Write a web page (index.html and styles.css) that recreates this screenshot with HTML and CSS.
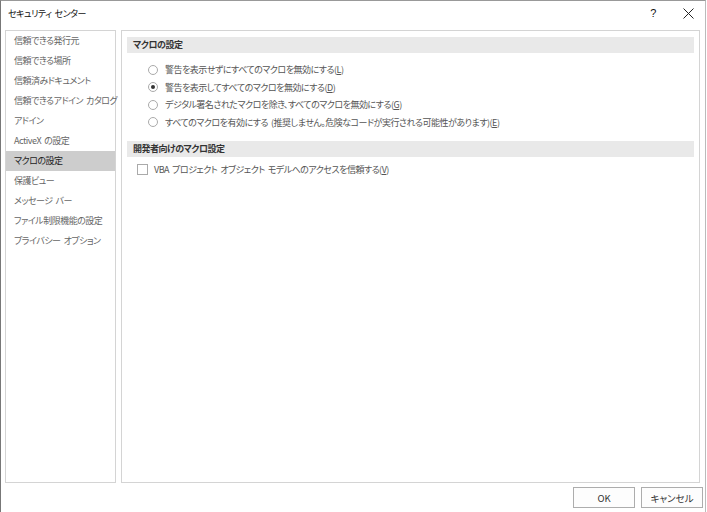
FILE: index.html
```html
<!DOCTYPE html>
<html lang="ja">
<head>
    <meta charset="UTF-8">
    <title>セキュリティ センター</title>
    <link rel="stylesheet" href="styles.css">
</head>
<body>

<div class="dialog">
    <div class="titlebar">
        <span class="title">セキュリティ センター</span>
        <span class="help">?</span>
        <span class="close">
            <svg width="11" height="11" viewBox="0 0 11 11"><path d="M0.5 0.5 L10.5 10.5 M10.5 0.5 L0.5 10.5" stroke="#222" stroke-width="1" fill="none"/></svg>
        </span>
    </div>

    <div class="main">
        <ul class="nav">
            <li>信頼できる発行元</li>
            <li>信頼できる場所</li>
            <li>信頼済みドキュメント</li>
            <li>信頼できるアドイン カタログ</li>
            <li>アドイン</li>
            <li>ActiveX の設定</li>
            <li class="selected">マクロの設定</li>
            <li>保護ビュー</li>
            <li>メッセージ バー</li>
            <li>ファイル制限機能の設定</li>
            <li>プライバシー オプション</li>
        </ul>

        <div class="content">
            <div class="section-head">マクロの設定</div>
            <div class="options">
                <label class="opt"><span class="radio"></span>警告を表示せずにすべてのマクロを無効にする(<u>L</u>)</label>
                <label class="opt"><span class="radio checked"></span>警告を表示してすべてのマクロを無効にする(<u>D</u>)</label>
                <label class="opt"><span class="radio"></span>デジタル署名されたマクロを除き、すべてのマクロを無効にする(<u>G</u>)</label>
                <label class="opt"><span class="radio"></span>すべてのマクロを有効にする (推奨しません。危険なコードが実行される可能性があります)(<u>E</u>)</label>
            </div>
            <div class="section-head">開発者向けのマクロ設定</div>
            <label class="check-row"><span class="checkbox"></span>VBA プロジェクト オブジェクト モデルへのアクセスを信頼する(<u>V</u>)</label>
        </div>
    </div>

    <div class="footer">
        <button class="btn">OK</button>
        <button class="btn">キャンセル</button>
    </div>
</div>

</body>
</html>
```

FILE: styles.css
```css
html, body {
    margin: 0;
    padding: 0;
    background: #fff;
}

body {
    font-family: "Noto Sans CJK JP", "Noto Sans", sans-serif;
    font-size: 9px;
    font-feature-settings: "palt";
    letter-spacing: -0.5px;
    word-spacing: 1.5px;
    color: #555;
}

.dialog {
    width: 704px;
    height: 511px;
    border-left: 1px solid #777;
    border-top: 1px solid #999;
    border-right: 1px solid #bbb;
    background: #fff;
    display: flex;
    flex-direction: column;
}

.titlebar {
    height: 24px;
    display: flex;
    align-items: center;
    padding-left: 7px;
    color: #111;
    font-size: 9px;
}

.title {
    flex: 1;
}

.help {
    width: 32px;
    text-align: center;
    font-family: "Liberation Sans", sans-serif;
    font-size: 11px;
    margin-right: 2px;
}

.close {
    width: 34px;
    display: flex;
    justify-content: center;
}

.main {
    display: flex;
    gap: 5px;
    height: 453px;
    padding: 5px 5px 0 4px;
}

.nav {
    list-style: none;
    margin: 0;
    padding: 0;
    width: 109px;
    border: 1px solid #d4d4d4;
    background: #fff;
}

.nav li {
    height: 20px;
    line-height: 20px;
    padding-left: 8px;
    white-space: nowrap;
    color: #666;
}

.nav li.selected {
    background: #cdcdcd;
    color: #222;
}

.content {
    flex: 1;
    border: 1px solid #d4d4d4;
    padding: 6px 5px 0 5px;
}

.section-head {
    height: 16px;
    line-height: 16px;
    background: #e9e9e9;
    padding-left: 6px;
    font-weight: bold;
    color: #333;
}

.options {
    padding: 8px 0 10px 21px;
}

.opt {
    display: flex;
    align-items: center;
    height: 17.5px;
    white-space: nowrap;
}

.radio {
    width: 8px;
    height: 8px;
    border: 1px solid #aaa;
    border-radius: 50%;
    margin-right: 7px;
    position: relative;
    background: #fff;
}

.radio.checked::after {
    content: "";
    position: absolute;
    left: 2px;
    top: 2px;
    width: 4px;
    height: 4px;
    border-radius: 50%;
    background: #333;
}

.check-row {
    display: flex;
    align-items: center;
    height: 17px;
    margin-top: 4px;
    padding-left: 10px;
    white-space: nowrap;
}

.checkbox {
    width: 9px;
    height: 9px;
    border: 1px solid #aaa;
    margin-right: 6px;
}

u {
    text-underline-offset: 1px;
}

.footer {
    display: flex;
    justify-content: flex-end;
    gap: 6px;
    padding: 4px 2px 0 0;
}

.btn {
    width: 62px;
    height: 21px;
    border: 1px solid #adadad;
    background: #fdfdfd;
    font-family: "Noto Sans CJK JP", "Noto Sans", sans-serif;
    font-size: 9.5px;
    font-feature-settings: "palt";
    color: #333;
    padding: 0;
}
```
